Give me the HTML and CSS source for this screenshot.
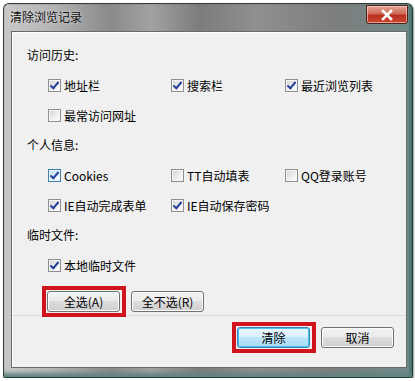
FILE: index.html
```html
<!DOCTYPE html>
<html lang="zh-CN">
<head>
    <meta charset="UTF-8">
    <title>清除浏览记录</title>
    <link rel="stylesheet" href="styles.css">
</head>
<body>
    <div class="window">
        <div class="titlebar">
            <span class="title">清除浏览记录</span>
            <span class="close">
                <svg width="14" height="12" viewBox="0 0 14 12"><path d="M3 2 L11 10 M11 2 L3 10" stroke="#fff" stroke-width="2.6" stroke-linecap="square"/></svg>
            </span>
        </div>
        <div class="panel">
            <div class="content">
                <div class="heading">访问历史:</div>
                <div class="options">
                    <label class="opt"><span class="box checked"></span>地址栏</label>
                    <label class="opt"><span class="box checked"></span>搜索栏</label>
                    <label class="opt"><span class="box checked"></span>最近浏览列表</label>
                    <label class="opt"><span class="box"></span>最常访问网址</label>
                </div>
                <div class="heading">个人信息:</div>
                <div class="options">
                    <label class="opt"><span class="box checked hover"></span>Cookies</label>
                    <label class="opt"><span class="box"></span>TT自动填表</label>
                    <label class="opt"><span class="box"></span>QQ登录账号</label>
                    <label class="opt"><span class="box checked"></span>IE自动完成表单</label>
                    <label class="opt"><span class="box checked"></span>IE自动保存密码</label>
                </div>
                <div class="heading">临时文件:</div>
                <div class="options">
                    <label class="opt"><span class="box checked"></span>本地临时文件</label>
                </div>
                <div class="select-row">
                    <button class="btn marked">全选(A)</button>
                    <button class="btn">全不选(R)</button>
                </div>
            </div>
            <div class="footer">
                <button class="btn default marked">清除</button>
                <button class="btn">取消</button>
            </div>
        </div>
    </div>
</body>
</html>
```

FILE: styles.css
```css
body {
    margin: 0;
    background: #fff;
    font-family: "Noto Sans CJK SC", "DejaVu Sans", sans-serif;
    font-size: 12px;
    color: #000;
}
.window {
    box-sizing: border-box;
    width: 410px;
    height: 375px;
    margin: 3px 0 0 3px;
    padding: 0 5px 9px 7px;
    border: 1px solid #3a3a3a;
    border-right-color: #1f3f3d;
    border-bottom-color: #1f3f3d;
    border-radius: 6px 6px 2px 2px;
    background: linear-gradient(to right, #c9c9c9 0%, #b4b4b4 12%, #8a8a8a 26%, #a2a2a2 36%, #7c7c7c 48%, #909090 62%, #7e7e7e 80%, #6f8a88 100%);
    box-shadow: inset 0 -6px 4px -2px #5f8480, inset -3px 0 3px -1px #3f6a66, 1px 1px 2px rgba(0, 0, 0, 0.4);
    display: flex;
    flex-direction: column;
}
.titlebar {
    height: 27px;
    display: flex;
    align-items: flex-start;
    justify-content: space-between;
}
.title {
    margin-top: 5px;
    margin-left: -1px;
    line-height: 16px;
    color: #111;
    text-shadow: 0 0 3px #e8e8e8;
}
.close {
    box-sizing: border-box;
    width: 42px;
    height: 19px;
    margin-top: 1px;
    margin-right: -1px;
    border: 1px solid #4a2320;
    border-radius: 0 0 3px 3px;
    background: linear-gradient(#e4a394 0%, #d06a58 45%, #b8311f 55%, #c8482f 100%);
    box-shadow: inset 0 0 0 1px rgba(255, 220, 210, 0.6);
    display: flex;
    align-items: center;
    justify-content: center;
}
.panel {
    flex: 1;
    display: flex;
    flex-direction: column;
    background: #f0f0f0;
    border: 1px solid #6a6a6a;
    box-shadow: inset 1px 1px 0 #fff;
}
.content {
    flex: 1;
    padding: 8px 0 0 15px;
}
.heading {
    height: 30px;
    line-height: 30px;
}
.options {
    display: grid;
    grid-template-columns: 123px 114px auto;
    padding-left: 21px;
}
.opt {
    height: 30px;
    display: flex;
    align-items: center;
    gap: 3px;
    white-space: nowrap;
}
.box {
    box-sizing: border-box;
    width: 13px;
    height: 13px;
    border: 1px solid #8f8f8f;
    background: linear-gradient(135deg, #d2d2d2, #f4f4f4 70%, #fff);
    box-shadow: inset 0 0 0 1px #f6f6f6;
    position: relative;
}
.box.hover {
    border-color: #3c7fb1;
    background: linear-gradient(135deg, #b9dcf4, #eaf6fd 70%, #fff);
}
.box.checked::after {
    content: "";
    position: absolute;
    left: 3px;
    top: 0px;
    width: 3px;
    height: 7px;
    border: solid #23409a;
    border-width: 0 2px 2px 0;
    transform: rotate(40deg);
}
.select-row {
    margin-top: 11px;
    padding-left: 20px;
    display: flex;
    gap: 11px;
}
.btn {
    box-sizing: border-box;
    width: 73px;
    height: 21px;
    padding: 0;
    font-family: inherit;
    font-size: 12px;
    color: #000;
    border: 1px solid #707070;
    border-radius: 3px;
    background: linear-gradient(#f2f2f2 0%, #ebebeb 49%, #dddddd 50%, #cfcfcf 100%);
    box-shadow: inset 0 0 0 1px #fbfbfb;
}
.btn.default {
    border-color: #3c7fb1;
    box-shadow: inset 0 0 0 1px #48c5f1;
    background: linear-gradient(#eaf6fd 0%, #d9f0fc 49%, #bee6fd 50%, #a7d9f5 100%);
}
/* red highlight frame drawn over the button edge */
.btn.marked {
    position: relative;
}
.btn.marked::after {
    content: "";
    position: absolute;
    top: -6px;
    bottom: -6px;
    left: -6px;
    right: -7px;
    border: 4px solid #d0141d;
}
.footer {
    height: 40px;
    border-top: 1px solid #dadada;
    padding: 11px 12px 0 0;
    display: flex;
    justify-content: flex-end;
    align-items: flex-start;
    gap: 11px;
}
```
